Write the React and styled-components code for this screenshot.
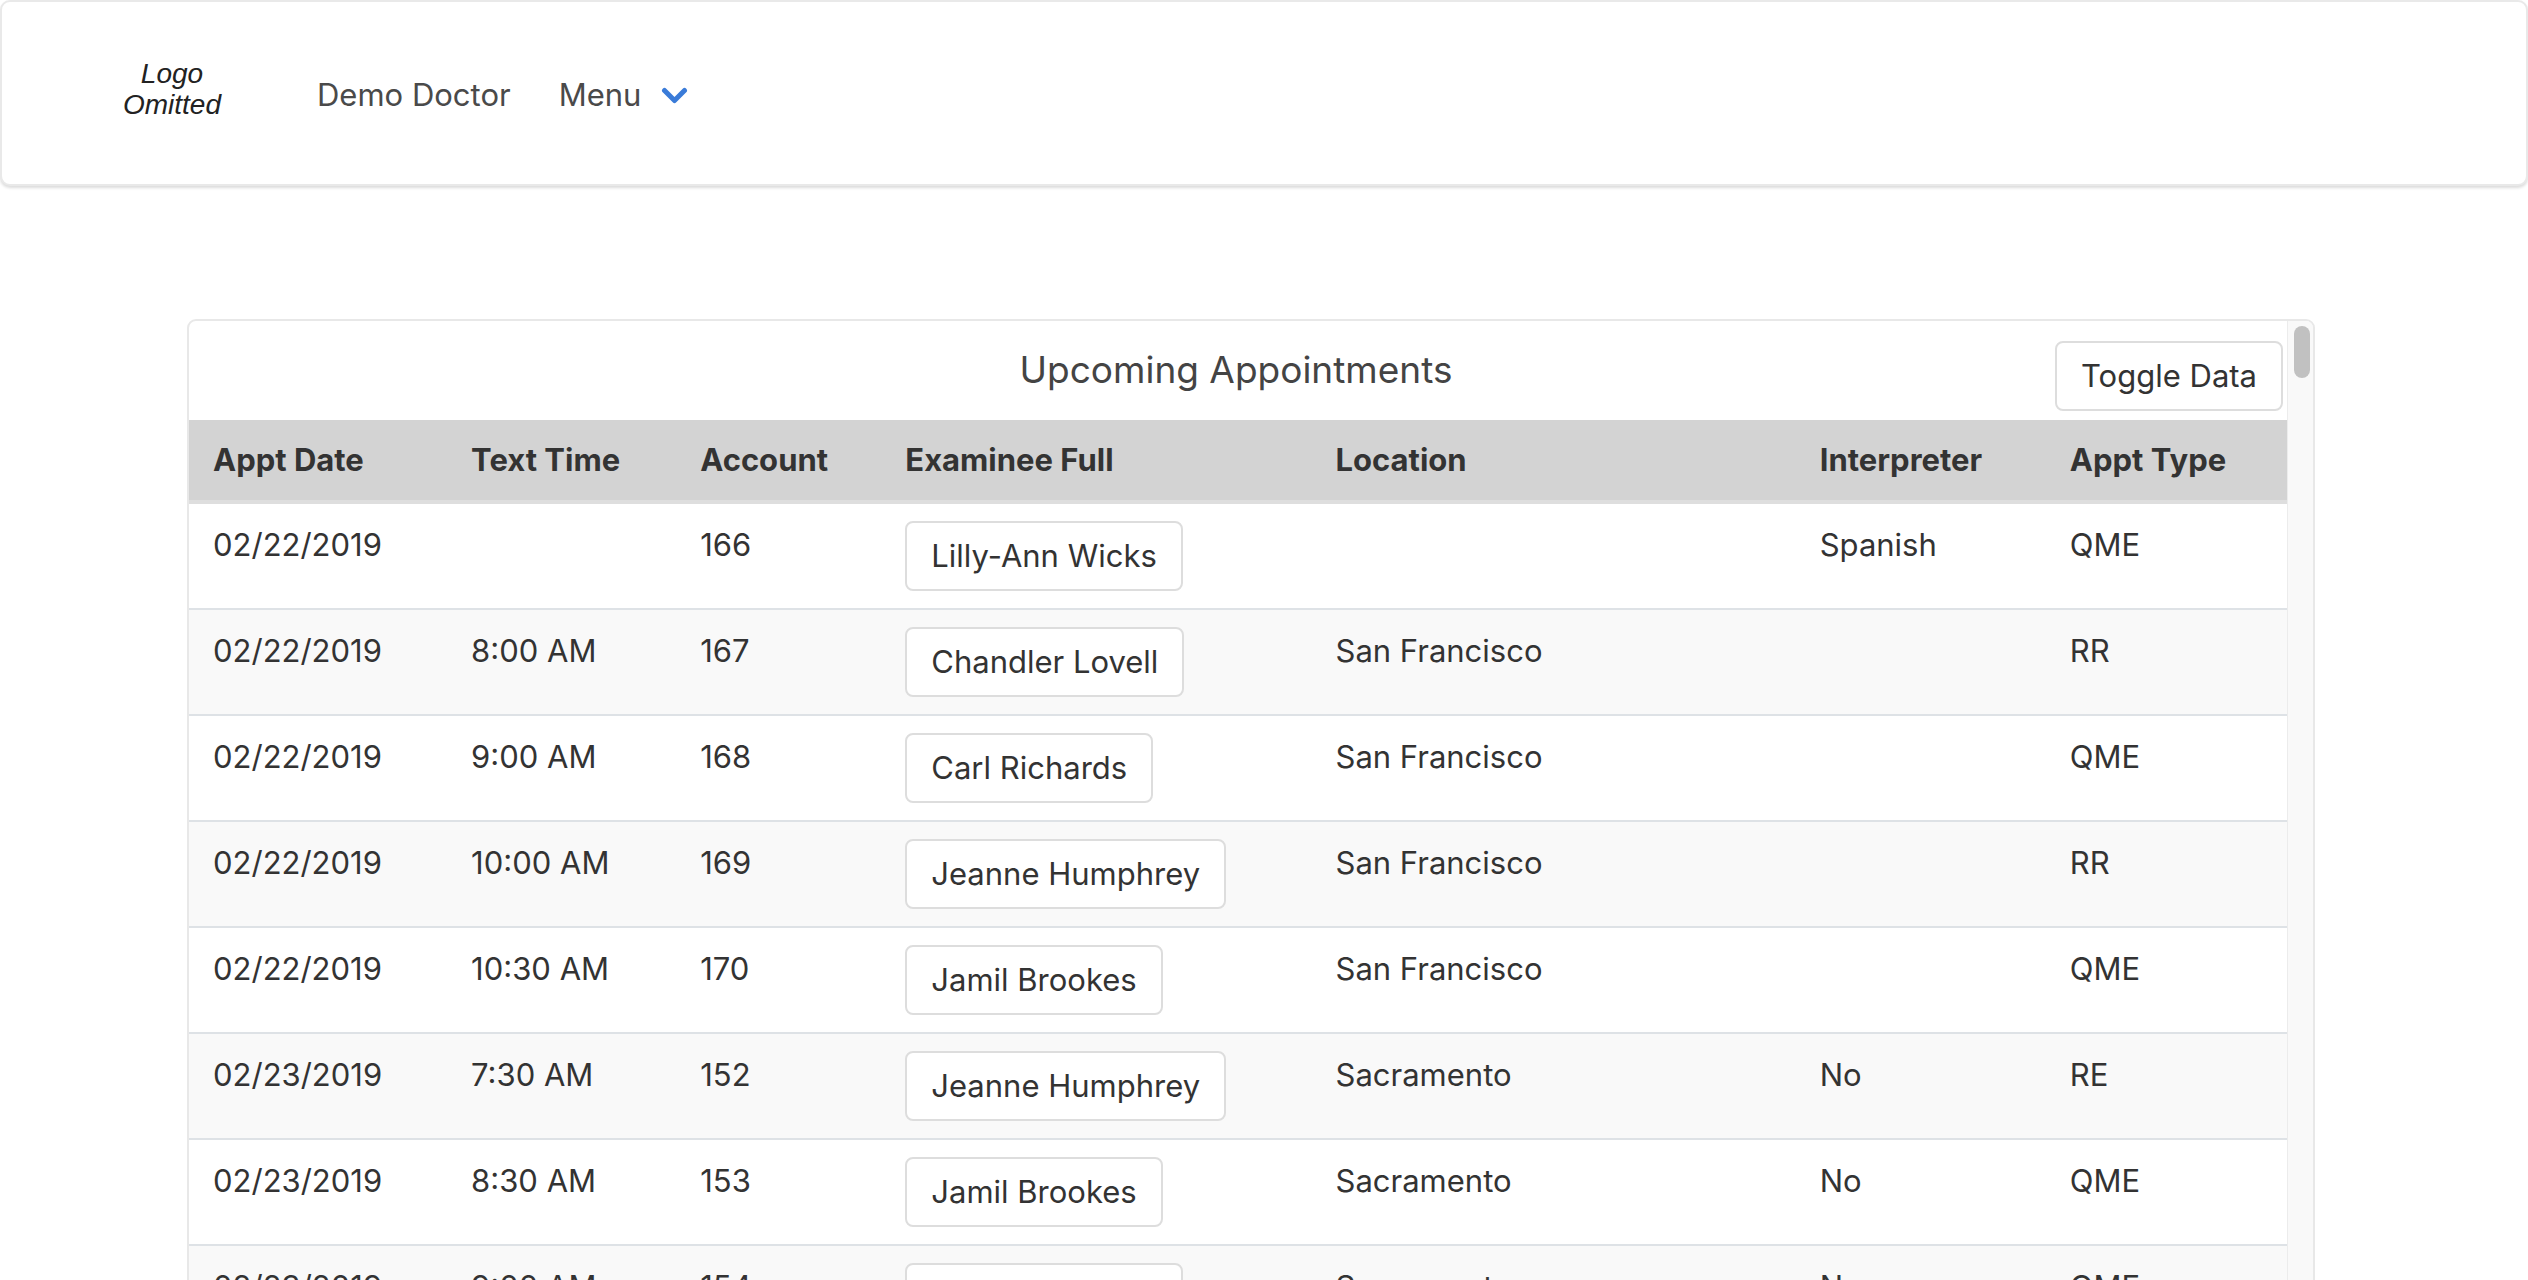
import React from "react";
import styled, { createGlobalStyle } from "styled-components";

const GlobalStyle = createGlobalStyle`
  html, body {
    margin: 0;
    padding: 0;
    background: #ffffff;
    overflow: hidden;
  }
  body {
    font-family: Inter, "Noto Sans", "Liberation Sans", sans-serif;
    color: #333333;
  }
  * { box-sizing: border-box; }
`;

const Page = styled.div`
  width: 2528px;
  height: 1280px;
  overflow: hidden;
`;

const TopBar = styled.header`
  height: 186px;
  border: 2px solid #e9e9e9;
  border-radius: 10px;
  box-shadow: 0 2px 3px rgba(0, 0, 0, 0.14);
  background: #fff;
  display: flex;
  align-items: center;
  padding-left: 120px;
`;

const Logo = styled.div`
  font-family: "Liberation Sans", Arial, sans-serif;
  font-style: italic;
  font-size: 28px;
  line-height: 31px;
  color: #222;
  text-align: center;
  width: 100px;
  margin-top: -8px;
  margin-right: 95px;
`;

const NavItem = styled.div`
  font-size: 31px;
  line-height: 40px;
  color: #4a4a4a;
  display: flex;
  align-items: center;
  margin-top: 4px;
  margin-right: ${(p) => p.$gap || 0}px;
`;

const Chevron = styled.svg`
  width: 27px;
  height: 18px;
  margin-left: 20px;
  margin-top: 2px;
`;

const Card = styled.section`
  margin: 133px 0 0 187px;
  width: 2128px;
  height: 1000px;
  border: 2px solid #e8e8e8;
  border-radius: 9px;
  overflow: hidden;
  background: #fff;
  display: flex;
`;

const Content = styled.div`
  flex: 1;
  min-width: 0;
`;

const Rail = styled.div`
  width: 26px;
  flex: none;
  background: #f9f9f9;
  border-left: 1px solid #ececec;
  padding: 5px 3px 0 6px;
`;

const Thumb = styled.div`
  width: 16px;
  height: 52px;
  border-radius: 8px;
  background: #c1c1c1;
`;

const TitleRow = styled.div`
  display: grid;
  grid-template-columns: 1fr auto 1fr;
  align-items: start;
  padding: 20px 4px 9px 0;
`;

const Title = styled.h2`
  grid-column: 2;
  margin: 6px 0 0 0;
  font-size: 37px;
  line-height: 45px;
  font-weight: 400;
  color: #444;
`;

const Button = styled.button`
  font-family: inherit;
  font-size: 31px;
  line-height: 48px;
  color: #333;
  background: #fff;
  border: 2px solid #dddddd;
  border-radius: 8px;
  padding: 9px 24px;
  white-space: nowrap;
  cursor: pointer;
  justify-self: ${(p) => (p.$end ? "end" : "start")};
  grid-column: ${(p) => (p.$end ? 3 : "auto")};
`;

const Table = styled.table`
  width: 100%;
  table-layout: fixed;
  border-collapse: collapse;
  font-size: 31px;
  line-height: 48px;
  color: #333;
`;

const Th = styled.th`
  background: #d3d3d3;
  text-align: left;
  font-weight: 700;
  color: #333;
  padding: 16px 24px;
  border-bottom: 4px solid #dedede;
  white-space: nowrap;
`;

const Row = styled.tr`
  background: ${(p) => (p.$striped ? "#f9f9f9" : "#ffffff")};
`;

const Td = styled.td`
  vertical-align: top;
  padding: 17px 24px;
  border-top: 2px solid #dee2e6;
  white-space: nowrap;
`;

const columns = [
  { label: "Appt Date", width: 258 },
  { label: "Text Time", width: 229 },
  { label: "Account", width: 205 },
  { label: "Examinee Full", width: 430 },
  { label: "Location", width: 484 },
  { label: "Interpreter", width: 250 },
  { label: "Appt Type", width: 241 },
];

const rows = [
  ["02/22/2019", "", "166", "Lilly-Ann Wicks", "", "Spanish", "QME"],
  ["02/22/2019", "8:00 AM", "167", "Chandler Lovell", "San Francisco", "", "RR"],
  ["02/22/2019", "9:00 AM", "168", "Carl Richards", "San Francisco", "", "QME"],
  ["02/22/2019", "10:00 AM", "169", "Jeanne Humphrey", "San Francisco", "", "RR"],
  ["02/22/2019", "10:30 AM", "170", "Jamil Brookes", "San Francisco", "", "QME"],
  ["02/23/2019", "7:30 AM", "152", "Jeanne Humphrey", "Sacramento", "No", "RE"],
  ["02/23/2019", "8:30 AM", "153", "Jamil Brookes", "Sacramento", "No", "QME"],
  ["02/23/2019", "9:00 AM", "154", "Lilly-Ann Wicks", "Sacramento", "No", "QME"],
];

export default function App() {
  return (
    <Page>
      <GlobalStyle />
      <TopBar>
        <Logo>
          Logo
          <br />
          Omitted
        </Logo>
        <NavItem $gap={48}>Demo Doctor</NavItem>
        <NavItem>
          Menu
          <Chevron viewBox="0 0 27 18" aria-hidden="true">
            <polyline
              points="3.5,3.5 13.5,13.5 23.5,3.5"
              fill="none"
              stroke="#3a7bd8"
              strokeWidth="5"
              strokeLinecap="round"
              strokeLinejoin="round"
            />
          </Chevron>
        </NavItem>
      </TopBar>

      <Card>
        <Content>
          <TitleRow>
            <Title>Upcoming Appointments</Title>
            <Button $end>Toggle Data</Button>
          </TitleRow>
          <Table>
            <colgroup>
              {columns.map((c) => (
                <col key={c.label} style={{ width: c.width }} />
              ))}
            </colgroup>
            <thead>
              <tr>
                {columns.map((c) => (
                  <Th key={c.label}>{c.label}</Th>
                ))}
              </tr>
            </thead>
            <tbody>
              {rows.map((r, i) => (
                <Row key={i} $striped={i % 2 === 1}>
                  <Td>{r[0]}</Td>
                  <Td>{r[1]}</Td>
                  <Td>{r[2]}</Td>
                  <Td>
                    <Button>{r[3]}</Button>
                  </Td>
                  <Td>{r[4]}</Td>
                  <Td>{r[5]}</Td>
                  <Td>{r[6]}</Td>
                </Row>
              ))}
            </tbody>
          </Table>
        </Content>
        <Rail>
          <Thumb />
        </Rail>
      </Card>
    </Page>
  );
}
